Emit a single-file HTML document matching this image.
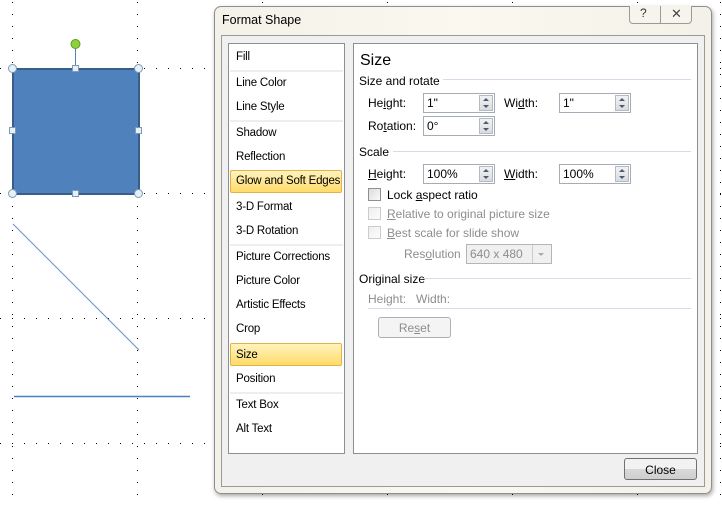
<!DOCTYPE html>
<html><head><meta charset="utf-8"><style>
*{margin:0;padding:0;box-sizing:border-box}
body{width:722px;height:506px;background:#fff;position:relative;overflow:hidden;font-family:"Liberation Sans",sans-serif;font-size:12px;color:#000}
.abs{position:absolute}
.dlg{left:214px;top:6px;width:498px;height:488px;border:1px solid #8e8e8e;border-radius:7px;background:linear-gradient(90deg,#f4f2e8,#fbf9ef 50%,#f4f2e8);box-shadow:1px 2px 4px rgba(0,0,0,.35)}
.frame{left:221px;top:35px;width:484px;height:452px;border:1px solid #9a9a9a;background:#f0f0f0}
.list{left:228px;top:43px;width:117px;height:411px;border:1px solid #8e8f8f;background:#fff}
.item{position:absolute;left:7px;font-size:11.5px;white-space:nowrap;letter-spacing:-0.2px}
.sep{position:absolute;left:1px;width:113px;height:2px;background:#eeeef2}
.sel{position:absolute;left:1px;width:112px;height:23px;border:1px solid #e3b34a;border-radius:2px;background:linear-gradient(#fff3bd,#ffdb6a)}
.panel{left:353px;top:43px;width:345px;height:411px;border:1px solid #8e8f8f;background:#fff}
.t{position:absolute;white-space:nowrap}
.hr{position:absolute;height:1px;background:#d5dde8}
.box{position:absolute;height:20px;border:1px solid #a5acb5;background:#fff;padding:2px 0 0 3px}
.spin{position:absolute;right:1px;top:1px;width:14px;height:16px;border:1px solid #b5bac0;background:linear-gradient(#f2f2f2,#dadcdf)}
.spin:before{content:"";position:absolute;left:3px;top:2px;border:3px solid transparent;border-bottom:3px solid #4a5a75;border-top:0}
.spin:after{content:"";position:absolute;left:3px;top:9px;border:3px solid transparent;border-top:3px solid #4a5a75;border-bottom:0}
.cb{position:absolute;width:13px;height:13px;border:1px solid #8f8f8f;background:linear-gradient(135deg,#dcdcdc,#fafafa)}
.dis{color:#8d8d8d}
.btn{position:absolute;border:1px solid #707070;border-radius:3px;background:linear-gradient(#f2f2f2 50%,#d9d9d9 50%,#cfcfcf);text-align:center}
u{text-decoration:underline}
</style></head><body>
<svg class="abs" style="left:0;top:0" width="722" height="506">
<g stroke="#000" stroke-width="1" stroke-dasharray="1 11">
<line x1="12.5" y1="2" x2="12.5" y2="506"/>
<line x1="137.5" y1="2" x2="137.5" y2="506"/>
<line x1="0" y1="68.5" x2="722" y2="68.5"/>
<line x1="0" y1="193.5" x2="722" y2="193.5"/>
<line x1="0" y1="318.5" x2="722" y2="318.5"/>
<line x1="0" y1="443.5" x2="722" y2="443.5"/>
<line x1="262.5" y1="2" x2="262.5" y2="506"/>
<line x1="387.5" y1="2" x2="387.5" y2="506"/>
<line x1="512.5" y1="2" x2="512.5" y2="506"/>
<line x1="637.5" y1="2" x2="637.5" y2="506"/>
<line x1="720.5" y1="2" x2="720.5" y2="506"/>
</g>
<rect x="13" y="69" width="126" height="125" fill="#4f81bd" stroke="#385d8a" stroke-width="2"/>
<line x1="75.5" y1="47" x2="75.5" y2="68" stroke="#4f81bd"/>
<circle cx="75.5" cy="44" r="4.5" fill="#8fd13a" stroke="#5c9a1e"/>
<g fill="#e6f0f7" stroke="#7f9bb3">
<circle cx="12.5" cy="68.5" r="4"/><circle cx="138.5" cy="68.5" r="4"/>
<circle cx="12.5" cy="193.5" r="4"/><circle cx="138.5" cy="193.5" r="4"/>
<rect x="72.5" y="65.5" width="6" height="6"/><rect x="72.5" y="190.5" width="6" height="6"/>
<rect x="9.5" y="127.5" width="6" height="6"/><rect x="135.5" y="127.5" width="6" height="6"/>
</g>
<line x1="13" y1="224" x2="139" y2="350" stroke="#6b8fbf"/>
<line x1="14" y1="396.5" x2="190" y2="396.5" stroke="#4f81bd" stroke-width="1.5"/>
</svg>
<div class="abs dlg"></div>
<div class="t" style="left:222px;top:13px;font-size:12.5px">Format Shape</div>
<div class="abs" style="left:629px;top:6px;width:63px;height:18px;border:1px solid #9a9a9a;border-top:0;border-radius:0 0 4px 4px;background:#f6f4ec"></div>
<div class="abs" style="left:660px;top:6px;width:1px;height:18px;background:#9a9a9a"></div>
<div class="t" style="left:640px;top:6px;font-size:12px;color:#333">?</div>
<div class="t" style="left:671px;top:6px;font-size:13px;color:#444">✕</div>
<div class="abs frame"></div>
<div class="abs list">
<div class="item" style="top:7px">Fill</div>
<div class="sep" style="top:26px"></div>
<div class="item" style="top:33px">Line Color</div>
<div class="item" style="top:57px">Line Style</div>
<div class="sep" style="top:76px"></div>
<div class="item" style="top:83px">Shadow</div>
<div class="item" style="top:107px">Reflection</div>
<div class="sel" style="top:126px"></div>
<div class="item" style="top:131px">Glow and Soft Edges</div>
<div class="item" style="top:157px">3-D Format</div>
<div class="item" style="top:181px">3-D Rotation</div>
<div class="sep" style="top:200px"></div>
<div class="item" style="top:207px">Picture Corrections</div>
<div class="item" style="top:231px">Picture Color</div>
<div class="item" style="top:255px">Artistic Effects</div>
<div class="item" style="top:279px">Crop</div>
<div class="sel" style="top:299px"></div>
<div class="item" style="top:305px">Size</div>
<div class="item" style="top:329px">Position</div>
<div class="sep" style="top:348px"></div>
<div class="item" style="top:355px">Text Box</div>
<div class="item" style="top:379px">Alt Text</div>
</div>
<div class="abs panel"></div>
<div class="t" style="left:360px;top:52px;font-size:16px">Size</div>
<div class="t" style="left:359px;top:74px">Size and rotate</div>
<div class="hr" style="left:443px;top:79px;width:248px"></div>
<div class="t" style="left:368px;top:96px">He<u>i</u>ght:</div>
<div class="box" style="left:423px;top:93px;width:72px">1"<div class="spin"></div></div>
<div class="t" style="left:504px;top:96px">Wi<u>d</u>th:</div>
<div class="box" style="left:559px;top:93px;width:72px">1"<div class="spin"></div></div>
<div class="t" style="left:368px;top:119px">Ro<u>t</u>ation:</div>
<div class="box" style="left:423px;top:116px;width:72px">0°<div class="spin"></div></div>
<div class="t" style="left:359px;top:145px">Scale</div>
<div class="hr" style="left:393px;top:151px;width:298px"></div>
<div class="t" style="left:368px;top:167px"><u>H</u>eight:</div>
<div class="box" style="left:423px;top:164px;width:72px">100%<div class="spin"></div></div>
<div class="t" style="left:504px;top:167px"><u>W</u>idth:</div>
<div class="box" style="left:559px;top:164px;width:72px">100%<div class="spin"></div></div>
<div class="cb" style="left:368px;top:188px"></div>
<div class="t" style="left:387px;top:188px">Lock <u>a</u>spect ratio</div>
<div class="cb" style="left:368px;top:207px;opacity:.45"></div>
<div class="t dis" style="left:387px;top:207px"><u>R</u>elative to original picture size</div>
<div class="cb" style="left:368px;top:226px;opacity:.45"></div>
<div class="t dis" style="left:387px;top:226px"><u>B</u>est scale for slide show</div>
<div class="t dis" style="left:404px;top:247px">Res<u>o</u>lution</div>
<div class="abs" style="left:466px;top:244px;width:86px;height:20px;border:1px solid #b5b5b5;background:#f0f0f0"></div>
<div class="t dis" style="left:470px;top:247px">640 x 480</div>
<div class="abs" style="left:532px;top:245px;width:19px;height:18px;border-left:1px solid #ccc"></div>
<div class="abs" style="left:538px;top:253px;border:3px solid transparent;border-top:3px solid #aaa;border-bottom:0"></div>
<div class="t" style="left:359px;top:272px">Original size</div>
<div class="hr" style="left:422px;top:278px;width:269px"></div>
<div class="t dis" style="left:368px;top:292px">Height:&nbsp;&nbsp;&nbsp;Width:</div>
<div class="hr" style="left:368px;top:308px;width:323px"></div>
<div class="btn dis" style="left:378px;top:317px;width:73px;height:21px;border-color:#b0b0b0;background:#f4f4f4;padding-top:3px">Re<u>s</u>et</div>
<div class="btn" style="left:624px;top:458px;width:73px;height:22px;padding-top:4px">Close</div>
</body></html>
